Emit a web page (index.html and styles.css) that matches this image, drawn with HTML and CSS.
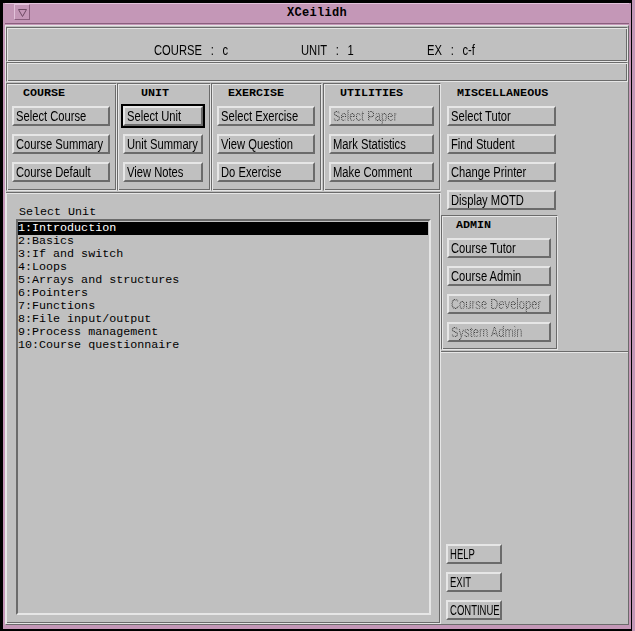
FILE: index.html
```html
<!DOCTYPE html>
<html lang="en">
<head>
  <meta charset="UTF-8" />
  <title>XCeilidh</title>
  <link rel="stylesheet" href="styles.css">
</head>
<body>
  <div class="screen">
    <div class="window">
      <div class="titlebar">
        <div class="menu-btn">
          <svg width="11" height="11" viewBox="0 0 11 11"><path d="M1.5 2.5 H9.5 L5.5 9.5 Z" fill="none" stroke="#6e4a64" stroke-width="1"/></svg>
        </div>
        <div class="title">XCeilidh</div>
      </div>

      <div class="client">
        <div class="panel info">
          <span class="info-course"><span class="lbl">COURSE : c</span></span>
          <span class="info-unit"><span class="lbl">UNIT : 1</span></span>
          <span><span class="lbl">EX : c-f</span></span>
        </div>
        <div class="panel status"></div>

        <div class="main">
          <div class="left">
            <div class="groups">
              <div class="group g-course">
                <div class="group-title">COURSE</div>
                <button class="btn"><span class="lbl">Select Course</span></button>
                <button class="btn"><span class="lbl">Course Summary</span></button>
                <button class="btn"><span class="lbl">Course Default</span></button>
              </div>
              <div class="group g-unit">
                <div class="group-title">UNIT</div>
                <button class="btn default"><span class="lbl">Select Unit</span></button>
                <button class="btn"><span class="lbl">Unit Summary</span></button>
                <button class="btn"><span class="lbl">View Notes</span></button>
              </div>
              <div class="group g-exercise">
                <div class="group-title">EXERCISE</div>
                <button class="btn"><span class="lbl">Select Exercise</span></button>
                <button class="btn"><span class="lbl">View Question</span></button>
                <button class="btn"><span class="lbl">Do Exercise</span></button>
              </div>
              <div class="group g-utilities">
                <div class="group-title">UTILITIES</div>
                <button class="btn disabled"><span class="lbl stipple">Select Paper</span></button>
                <button class="btn"><span class="lbl">Mark Statistics</span></button>
                <button class="btn"><span class="lbl">Make Comment</span></button>
              </div>
            </div>

            <div class="list-frame">
              <div class="list-label">Select Unit</div>
              <div class="list">
                <div class="item selected">1:Introduction</div>
                <div class="item">2:Basics</div>
                <div class="item">3:If and switch</div>
                <div class="item">4:Loops</div>
                <div class="item">5:Arrays and structures</div>
                <div class="item">6:Pointers</div>
                <div class="item">7:Functions</div>
                <div class="item">8:File input/output</div>
                <div class="item">9:Process management</div>
                <div class="item">10:Course questionnaire</div>
              </div>
            </div>
          </div>

          <div class="right">
            <div class="misc">
              <div class="group-title misc-title">MISCELLANEOUS</div>
              <div class="misc-btns">
                <button class="btn"><span class="lbl">Select Tutor</span></button>
                <button class="btn"><span class="lbl">Find Student</span></button>
                <button class="btn"><span class="lbl">Change Printer</span></button>
                <button class="btn"><span class="lbl">Display MOTD</span></button>
              </div>
              <div class="group g-admin">
                <div class="group-title">ADMIN</div>
                <button class="btn"><span class="lbl">Course Tutor</span></button>
                <button class="btn"><span class="lbl">Course Admin</span></button>
                <button class="btn disabled"><span class="lbl stipple">Course Developer</span></button>
                <button class="btn disabled"><span class="lbl stipple">System Admin</span></button>
              </div>
            </div>

            <div class="actions">
              <button class="btn"><span class="lbl">HELP</span></button>
              <button class="btn"><span class="lbl">EXIT</span></button>
              <button class="btn"><span class="lbl">CONTINUE</span></button>
            </div>
          </div>
        </div>
      </div>
    </div>
  </div>
</body>
</html>
```

FILE: styles.css
```css
* {
  box-sizing: border-box;
}

body {
  margin: 0;
  padding: 0;
  background: #000;
}

.screen {
  width: 635px;
  height: 631px;
  background: #000;
  border-right: 3px solid #c497b7;
  overflow: hidden;
  padding: 3px 0 0 3px;
}

/* window manager frame */
.window {
  width: 628px;
  height: 626px;
  background: #c497b7;
  padding: 0 2px 4px 2px;
  display: flex;
  flex-direction: column;
}

.titlebar {
  height: 21px;
  display: flex;
  align-items: center;
  border-top: 1px solid #e2c2da;
  border-bottom: 1px solid #8a5f7e;
}

.menu-btn {
  width: 16px;
  height: 16px;
  margin-left: 9px;
  margin-top: -3px;
  border: 1px solid;
  border-color: #e2c2da #8a5f7e #8a5f7e #e2c2da;
  display: flex;
  align-items: center;
  justify-content: center;
}

.title {
  flex: 1;
  text-align: center;
  font-family: "Liberation Mono", monospace;
  font-weight: bold;
  font-size: 12px;
  letter-spacing: 0.3px;
  color: #000;
  margin-right: 25px;
  margin-top: -1px;
}

/* application area */
.client {
  flex: 1;
  margin-top: 1px;
  background: #c0c0c0;
  border: 1px solid;
  border-color: #e6e6e6 #6b6b6b #6b6b6b #e6e6e6;
  display: flex;
  flex-direction: column;
  font-family: "Liberation Sans", sans-serif;
  font-size: 14px;
  color: #000;
}

/* narrow helvetica look: squeeze the sans face */
.lbl {
  display: inline-block;
  transform: scaleX(0.8);
  transform-origin: 0 50%;
  white-space: nowrap;
}

.panel {
  border: 1px solid;
  border-color: #6b6b6b #e6e6e6 #e6e6e6 #6b6b6b;
  box-shadow: inset 1px 1px #e6e6e6, inset -1px -1px #6b6b6b;
}

.info {
  margin-top: 1px;
  height: 35px;
  padding: 14px 0 0 147px;
  line-height: 16px;
  display: flex;
}

.info .lbl {
  word-spacing: 7px;
}

.info-course {
  width: 147px;
}

.info-unit {
  width: 126px;
}

.status {
  height: 20px;
}

.main {
  flex: 1;
  display: flex;
}

.left {
  width: 435px;
  display: flex;
  flex-direction: column;
}

.groups {
  display: flex;
  margin-top: 1px;
  height: 108px;
}

.group {
  border: 1px solid;
  border-color: #6b6b6b #e6e6e6 #e6e6e6 #6b6b6b;
  box-shadow: inset 1px 1px #e6e6e6, inset -1px -1px #6b6b6b;
  padding: 2px 0 0 5px;
  display: flex;
  flex-direction: column;
  gap: 8px;
}

.group-title {
  font-family: "Liberation Mono", monospace;
  font-weight: bold;
  font-size: 11.7px;
  line-height: 14px;
  padding-left: 11px;
  margin-bottom: -2px;
}

.g-course { width: 111px; }
.g-course .btn { width: 98px; }

.g-unit { width: 94px; }
.g-unit .group-title { padding-left: 18px; }
.g-unit .btn { width: 80px; }

.g-exercise { width: 111px; }
.g-exercise .btn { width: 98px; }

.g-utilities { width: 118px; margin-left: 1px; }
.g-utilities .btn { width: 105px; }

/* motif style push button */
.btn {
  display: block;
  height: 20px;
  margin: 0;
  padding: 0 0 0 2px;
  background: #c0c0c0;
  border: 2px solid;
  border-color: #e6e6e6 #6b6b6b #6b6b6b #e6e6e6;
  font-family: "Liberation Sans", sans-serif;
  font-size: 14px;
  line-height: 16px;
  color: #000;
  text-align: left;
  overflow: hidden;
}

.btn.default {
  outline: 2px solid #000;
}

.stipple {
  color: transparent;
  background-image: repeating-conic-gradient(#2e2e2e 0 25%, transparent 0 50%);
  background-size: 2px 2px;
  -webkit-background-clip: text;
  background-clip: text;
}

.list-frame {
  flex: 1;
  margin-top: 1px;
  border: 1px solid;
  border-color: #6b6b6b #e6e6e6 #e6e6e6 #6b6b6b;
  box-shadow: inset 1px 1px #e6e6e6, inset -1px -1px #6b6b6b;
  border-left: 0;
  padding: 12px 9px 8px 10px;
}

.list-label {
  font-family: "Liberation Mono", monospace;
  font-size: 11.7px;
  line-height: 14px;
  padding-left: 3px;
}

.list {
  height: 396px;
  border: 2px solid;
  border-color: #6b6b6b #e6e6e6 #e6e6e6 #6b6b6b;
  padding-top: 1px;
  font-family: "Liberation Mono", monospace;
  font-size: 11.7px;
}

.item {
  height: 13px;
  line-height: 13px;
  white-space: nowrap;
}

.item.selected {
  background: #000;
  color: #fff;
  margin-right: 1px;
}

.right {
  flex: 1;
  display: flex;
  flex-direction: column;
}

.misc {
  padding-top: 4px;
  height: 271px;
  border-bottom: 1px solid #e6e6e6;
  box-shadow: inset 0 -1px #6b6b6b;
}

.misc-title {
  padding-left: 16px;
  margin-bottom: 0;
}

.misc-btns {
  display: flex;
  flex-direction: column;
  gap: 8px;
  padding: 6px 0 0 6px;
}

.misc-btns .btn {
  width: 109px;
}

.g-admin {
  width: 117px;
  margin-top: 5px;
  height: 135px;
}

.g-admin .group-title {
  padding-left: 9px;
}

.g-admin .btn {
  width: 104px;
}

.actions {
  margin-top: auto;
  display: flex;
  flex-direction: column;
  gap: 8px;
  padding: 0 0 4px 5px;
}

.actions .btn {
  width: 56px;
}

.actions .lbl {
  transform: scaleX(0.68);
}
```
